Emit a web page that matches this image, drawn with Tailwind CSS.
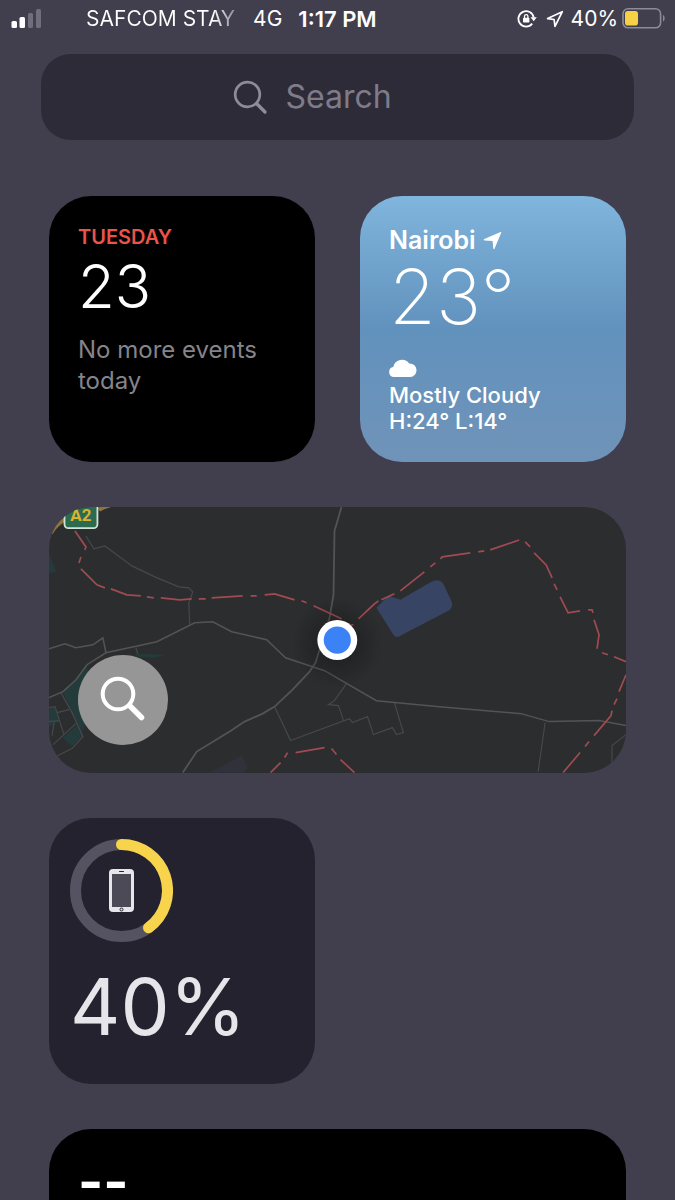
<!DOCTYPE html>
<html lang="en">
<head>
<meta charset="utf-8">
<meta name="viewport" content="width=device-width, initial-scale=1">
<title>Widgets</title>
<script src="https://cdn.jsdelivr.net/npm/@tailwindcss/browser@4"></script>
</head>
<body class="h-screen overflow-hidden bg-[#413e4e] font-['Inter',sans-serif] text-white">

<header class="grid h-[38px] grid-cols-[1fr_auto_1fr] items-center text-[21px] leading-7">
  <div class="flex items-center pr-4 pl-[11px]">
    <svg class="h-5 w-[31px] shrink-0" viewBox="0 0 31 20" fill="#fff" aria-label="Signal strength" role="img">
      <rect x="0.500" y="12" width="5.500" height="7" rx="1.500"/>
      <rect x="8.500" y="8" width="5.500" height="11" rx="1.500"/>
      <rect x="17" y="4" width="5" height="15" rx="1.500" opacity=".25"/>
      <rect x="25" y="0" width="5" height="19" rx="1.500" opacity=".25"/>
    </svg>
    <span class="ml-auto bg-linear-to-r from-white from-85% to-white/40 bg-clip-text whitespace-nowrap text-transparent">SAFCOM STAY</span>
    <span class="ml-[18px]">4G</span>
  </div>
  <time class="text-[22px] font-semibold whitespace-nowrap">1:17 PM</time>
  <div class="flex items-center justify-end pr-[9px]">
    <svg class="mr-[9px] h-5 w-5" viewBox="0 0 20 20" fill="none" stroke="#fff" stroke-width="1.800" aria-label="Rotation lock" role="img">
      <path d="M15.200 14.600A7.700 7.700 0 1 1 16.700 8.500"/>
      <path d="M13.500 8.300h6.300l-3.100 4z" fill="#fff" stroke="none"/>
      <rect x="6" y="8.800" width="6.400" height="4.800" rx=".8" fill="#fff" stroke="none"/>
      <path d="M7.500 9.500V7.300a1.700 1.700 0 0 1 3.400 0v2.200" stroke-width="1.300"/>
    </svg>
    <svg class="mr-[7px] h-[18px] w-[18px]" viewBox="0 0 18 18" fill="none" stroke="#fff" stroke-width="1.700" stroke-linejoin="round" aria-label="Location in use" role="img">
      <path d="M16.300 1.700 1.600 8.600l6.500.9.9 6.800z"/>
    </svg>
    <span>40%</span>
    <svg class="ml-1 h-[22px] w-11" viewBox="0 0 44 22" aria-label="Battery" role="img">
      <rect x="1" y="0.800" width="37.600" height="19" rx="5" fill="none" stroke="#8d8b95" stroke-width="1.600"/>
      <rect x="3" y="3" width="13" height="14.500" rx="2.800" fill="#f7d046"/>
      <path d="M41 7c2.200.8 2.200 5.600 0 6.400z" fill="#8d8b95"/>
    </svg>
  </div>
</header>

<main>
  <form role="search" class="mx-[41px] mt-4 flex h-[86px] items-center justify-center rounded-[30px] bg-[#2e2b38] pr-[50px]">
    <label for="search" class="mr-4">
      <svg class="h-9 w-9" viewBox="0 0 36 36" fill="none" stroke="#8f8c98" stroke-linecap="round" role="img" aria-label="Search">
        <circle cx="14.500" cy="15.500" r="12.300" stroke-width="2.700"/>
        <path d="m23.800 24.800 8.200 8.200" stroke-width="3.400"/>
      </svg>
    </label>
    <input id="search" type="search" placeholder="Search" class="field-sizing-content bg-transparent text-[32px] leading-10 text-white outline-none placeholder:text-[#7f7c89]">
  </form>

  <div class="mt-14 mr-[49px] ml-[49px] grid grid-cols-2 gap-[45px]">

    <section class="aspect-square rounded-[42px] bg-black px-[29px] pt-[29px]">
      <h2 class="text-xl leading-6 font-semibold text-[#ea5449]">TUESDAY</h2>
      <p class="mt-[7px] text-[60px] leading-[60px] font-light">23</p>
      <p class="mt-[18px] text-2xl leading-[31px] text-[#85848a]">No more events today</p>
    </section>

    <section class="aspect-square rounded-[42px] bg-linear-to-b from-[#80b5dd] via-[#6192bd] to-[#7093b8] px-[29px] pt-[29px]">
      <h2 class="flex items-center gap-[7px] text-[25px] leading-[30px] font-semibold">Nairobi
        <svg class="h-[19px] w-[19px]" viewBox="0 0 19 19" fill="#fff" aria-hidden="true"><path d="M17.600 1.100c.5-.2.8.1.6.7l-6.600 15.800c-.3.8-1.200.7-1.300-.1L9.600 10 1.500 9.400c-.9-.1-1-.9-.2-1.300z"/></svg>
      </h2>
      <p class="mt-[3px] text-[76px] leading-[76px] font-extralight">23°</p>
      <svg class="mt-6 h-[19px] w-7" viewBox="0 0 28 19" fill="#fff" aria-hidden="true"><path d="M5 19a5 5 0 0 1-.8-9.900A9 9 0 0 1 20.200 5.400 6.800 6.800 0 0 1 21.200 19z"/></svg>
      <p class="mt-[5px] text-[22px] leading-[26px] font-medium">Mostly Cloudy<br>H:24° L:14°</p>
    </section>

    <section class="relative col-span-2 overflow-hidden rounded-[42px] bg-[#2c2d2e]" aria-label="Map">
      <svg class="block w-full" viewBox="0 0 578 266" fill="none" aria-hidden="true">
        <defs>
          <radialGradient id="halo"><stop offset=".2" stop-color="#000" stop-opacity=".3"/><stop offset="1" stop-color="#000" stop-opacity="0"/></radialGradient>
        </defs>
        <!-- parks and built-up areas -->
        <g fill="#243b3c">
          <path d="M14 185 27 173 38 158 42 190 34 225 23 206zM14 231 30 217 34 229 23 240zM86 147 118 148 104 151 88 150zM0 46 7 65 0 66zM0 202l6-1 4 14-10 6z"/>
        </g>
        <path d="M161 266 193 249 199 260 196 266z" fill="#30323b"/>
        <path d="M328 101 340 89 352 93 383 75Q391 71 395 77L403 94Q406 100 400 104L352 129Q348 132 345 128z" fill="#384464"/>
        <!-- side streets -->
        <g stroke="#47484a" stroke-width="1.200">
          <path d="M37 29 45 42 56 39 83 59 106 70 130 80 140 81 144 85 140 96 141 118"/>
          <path d="M226 200 242 234 301 212 304 216 319 210 325 228 344 221 348 228 355 226 346 196M298 177 286 194 280 198 290 199 295 214"/>
          <path d="M497 216 490 265M578 228 564 239 564 260"/>
          <path d="M87 141 89 147M12 186 23 206 34 230 23 242 11 248 6 251M0 201 6 200 15 228M8 206 20 203M0 215 10 214M3 229 5 216M4 238 28 216"/>
        </g>
        <!-- roads -->
        <g stroke="#535456" stroke-width="1.500">
          <path d="M0 142 16 137 27 141 44 138 54 131 57 146"/>
          <path d="M0 191 14 185 27 173 38 158 57 146 108 135 146 116 164 115 183 125 218 133 237 151 276 164 328 194 391 200 473 207 501 215 551 214 578 219"/>
          <path d="M293 0 286 24 285 88 281 111 271 143 267 156 261 165 244 183 226 200 214 207 196 215 181 225 148 245 134 266" stroke-width="1.800"/>
        </g>
        <!-- district boundary -->
        <path stroke="#a04b53" stroke-width="1.700" d="M26 24 37 40 36 43M32 50 30 56M32 62 48 78 56 81M62 82 78 88 92 89M98 90 105 91M112 91 131 93 143 92M150 92h7M163 91 194 89M202 89h6M216 88 226 87 246 93M253 94 258 96M265 99 293 112M302 118h3M310 112 326 97 330 94M333 93 346 87M352 84 376 65M382 60 387 56M392 52 394 50 422 46M430 45 436 44M442 43 471 33M477 35 482 40M486 46 498 58 504 71M506 77 509 83M512 90 520 106 532 104M540 103h4l1 3M546 113 551 128 549 142M554 146 560 148M566 150 578 155M578 168 571 185M569 192 566 198M564 204 563 209 546 229M541 235 537 240M532 246 515 266M222 266 232 256M236 251 239 246M247 246 276 241M283 242 288 248M292 253 306 266"/>
        <!-- highway and its shield -->
        <path d="M2 26Q7 17 17 12M50 3Q54 0 62-2" stroke="#8e7440" stroke-width="4"/>
        <rect x="15.500" y="-8" width="33" height="29.200" rx="4" fill="#2d6b50" stroke="#cfe4d8" stroke-width="1.800"/>
        <text x="32" y="14.500" text-anchor="middle" font-family="Roboto, sans-serif" font-weight="700" font-size="17" fill="#d9b32e">A2</text>
        <!-- current location -->
        <circle cx="288.500" cy="136" r="46" fill="url(#halo)"/>
        <circle cx="288.800" cy="133.300" r="20" fill="#fff"/>
        <circle cx="288.800" cy="133.300" r="13.600" fill="#3b82f6"/>
      </svg>
      <button type="button" aria-label="Search map" class="absolute bottom-7 left-[29px] grid size-[90px] place-items-center rounded-full bg-[#969696]">
        <svg class="size-12" viewBox="0 0 48 48" fill="none" stroke="#fff" stroke-linecap="round" aria-hidden="true">
          <circle cx="19" cy="18" r="15.300" stroke-width="4"/>
          <path d="m31 30 11.500 11.500" stroke-width="5.500"/>
        </svg>
      </button>
    </section>

    <section class="aspect-square rounded-[42px] bg-[#23222e] px-[21px] pt-[21px]" aria-label="Phone battery">
      <svg class="size-[103px]" viewBox="0 0 103 103" fill="none" aria-hidden="true">
        <circle cx="51.500" cy="51.500" r="46" stroke="#555262" stroke-width="11"/>
        <path d="M51.500 5.500A46 46 0 0 1 78.540 88.710" stroke="#f8d44c" stroke-width="11" stroke-linecap="round"/>
        <rect x="39" y="30" width="25" height="43" rx="4" fill="#e6e5ea"/>
        <rect x="42" y="35" width="19" height="33" fill="#4d4a57"/>
        <path d="M49.500 32.500h4" stroke="#23222e" stroke-linecap="round"/>
        <circle cx="51.500" cy="70.500" r="1.500" stroke="#23222e"/>
      </svg>
      <p class="mt-[25px] text-[78px] leading-[80px] text-[#e6e5ea]">40%</p>
    </section>

    <section class="col-span-2 h-[266px] rounded-[42px] bg-black px-[29px] pt-[26px]">
      <p class="text-[54px] leading-[54px] font-bold">--</p>
    </section>
  </div>
</main>
</body>
</html>
